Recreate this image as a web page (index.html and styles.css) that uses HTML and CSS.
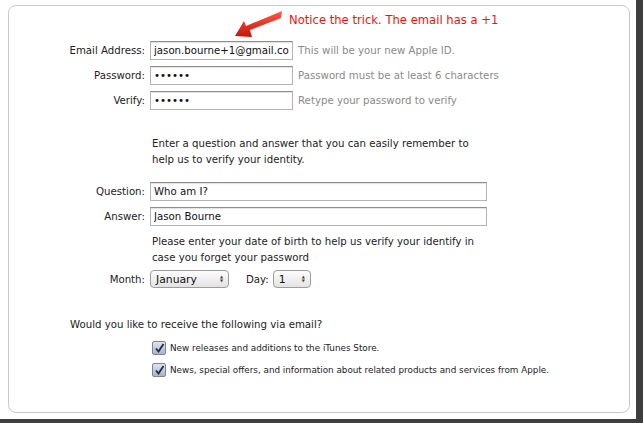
FILE: index.html
```html
<!DOCTYPE html>
<html lang="en">
<head>
    <meta charset="UTF-8">
    <title>Create Apple ID</title>
    <link rel="stylesheet" href="styles.css">
</head>
<body>
    <div class="frame">
    <div class="shot">
        <div class="panel">
            <div class="note">
                <svg class="arrow" width="70" height="32" viewBox="0 0 70 32">
                    <defs>
                        <linearGradient id="red" x1="0" y1="0" x2="0" y2="1">
                            <stop offset="0" stop-color="#ff5a4a"/>
                            <stop offset="1" stop-color="#c8120a"/>
                        </linearGradient>
                    </defs>
                    <path d="M67 3 L66 10 L35 22 L37 29 L20 28 L29 13 L31 18 Z" fill="url(#red)"/>
                </svg>
                <span>Notice the trick. The email has a +1</span>
            </div>

            <div class="row first">
                <label>Email Address:</label>
                <input class="short" type="text" value="jason.bourne+1@gmail.com">
                <span class="hint">This will be your new Apple ID.</span>
            </div>
            <div class="row">
                <label>Password:</label>
                <input class="short" type="password" value="secret">
                <span class="hint">Password must be at least 6 characters</span>
            </div>
            <div class="row">
                <label>Verify:</label>
                <input class="short" type="password" value="secret">
                <span class="hint">Retype your password to verify</span>
            </div>

            <p class="info first-info">Enter a question and answer that you can easily remember to<br>help us to verify your identity.</p>

            <div class="row qa">
                <label>Question:</label>
                <input class="long" type="text" value="Who am I?">
            </div>
            <div class="row">
                <label>Answer:</label>
                <input class="long" type="text" value="Jason Bourne">
            </div>

            <p class="info">Please enter your date of birth to help us verify your identify in<br>case you forget your password</p>

            <div class="row dob">
                <label>Month:</label>
                <div class="select month">January <span class="updown">&#9650;<br>&#9660;</span></div>
                <span class="day-label">Day:</span>
                <div class="select day">1 <span class="updown">&#9650;<br>&#9660;</span></div>
            </div>

            <p class="question">Would you like to receive the following via email?</p>

            <div class="check">
                <span class="box"><svg width="11" height="11" viewBox="0 0 11 11"><path d="M2 5.5 L4.5 8.5 L9.5 1" fill="none" stroke="#1c2a44" stroke-width="1.8"/></svg></span>
                New releases and additions to the iTunes Store.
            </div>
            <div class="check">
                <span class="box"><svg width="11" height="11" viewBox="0 0 11 11"><path d="M2 5.5 L4.5 8.5 L9.5 1" fill="none" stroke="#1c2a44" stroke-width="1.8"/></svg></span>
                News, special offers, and information about related products and services from Apple.
            </div>
        </div>
    </div>
    </div>
</body>
</html>
```

FILE: styles.css
```css
body {
    margin: 0;
    background: #ffffff;
    font-family: "DejaVu Sans", sans-serif;
    font-size: 10.2px;
    color: #222;
}
.frame {
    width: 644px;
    height: 423px;
    overflow: hidden;
}
.shot {
    width: 636px;
    height: 418px;
    padding-top: 1px;
    box-sizing: border-box;
    background: #ffffff;
    border-right: 7px solid #3e3e3e;
    border-bottom: 5px solid #3e3e3e;
    box-sizing: content-box;
}
.panel {
    position: relative;
    margin: 4px 0 0 8px;
    width: 620px;
    height: 406px;
    border: 1px solid #c9c9c9;
    border-radius: 8px;
}
.note {
    position: absolute;
    left: 206px;
    top: 2px;
    display: flex;
    align-items: flex-start;
    color: #e8150c;
    font-size: 11.6px;
}
.note span {
    margin-top: 5px;
    margin-left: 4px;
}
.row {
    display: flex;
    align-items: center;
    height: 19px;
    margin-top: 6px;
}
.row.first {
    margin-top: 35px;
}
.row label {
    width: 136px;
    text-align: right;
    padding-right: 5px;
}
input {
    height: 19px;
    box-sizing: border-box;
    border: 1px solid #b4b4b4;
    border-top-color: #8e8e8e;
    padding: 0 3px;
    font-family: inherit;
    font-size: 10.2px;
    color: #111;
    margin: 0;
    box-shadow: inset 0 1px 1px rgba(0, 0, 0, 0.12);
}
input.short {
    width: 143px;
}
input.long {
    width: 337px;
}
.hint {
    margin-left: 5px;
    color: #8a8a8a;
}
.info {
    margin: 8px 0 0 143px;
    line-height: 16px;
}
.first-info {
    margin-top: 26px;
}
.row.qa {
    margin-top: 14px;
}
.info + .row.dob {
    margin-top: 4px;
}
.dob {
    height: 18px;
}
.select {
    height: 18px;
    box-sizing: border-box;
    border: 1px solid #9d9d9d;
    border-radius: 4px;
    background: linear-gradient(#fdfdfd, #e3e3e3);
    display: flex;
    align-items: center;
    justify-content: space-between;
    padding: 0 5px;
    font-size: 10.8px;
    color: #111;
}
.month {
    width: 79px;
}
.day {
    width: 38px;
}
.updown {
    font-size: 4px;
    line-height: 4px;
    color: #444;
    text-align: center;
}
.day-label {
    margin-left: 17px;
    margin-right: 4px;
}
.question {
    margin: 29px 0 0 61px;
    line-height: 16px;
}
.check {
    display: flex;
    align-items: center;
    margin: 7px 0 0 143px;
    font-size: 8.8px;
    height: 16px;
}
.check + .check {
    margin-top: 6px;
}
.box {
    width: 12px;
    height: 12px;
    margin-right: 4px;
    border: 1px solid #7d8595;
    border-radius: 2px;
    background: linear-gradient(#dfe4ee, #aab4c8);
    display: flex;
    align-items: center;
    justify-content: center;
}
```
